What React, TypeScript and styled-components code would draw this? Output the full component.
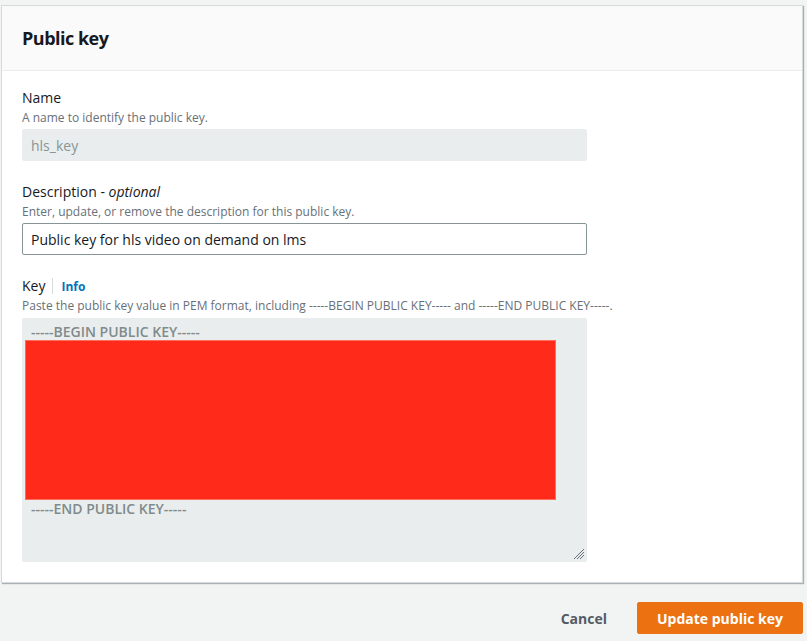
import React from "react";
import styled, { createGlobalStyle } from "styled-components";

const Global = createGlobalStyle`
  html, body { margin: 0; padding: 0; background: #f2f3f3; }
  body { font-family: "Open Sans", "Noto Sans", sans-serif; color: #16191f; }
  * { box-sizing: border-box; }
`;

const Page = styled.div`
  width: 807px;
  height: 641px;
  padding: 5px 4px 0 1px;
  display: flex;
  flex-direction: column;
`;

const Panel = styled.section`
  background: #fff;
  border: 1px solid #d5dbdb;
  box-shadow: 1px 1px 1px 0 rgba(0, 28, 36, 0.3);
  display: flex;
  flex-direction: column;
`;

const Header = styled.header`
  height: 65px;
  background: #fafafa;
  border-bottom: 1px solid #eaeded;
  display: flex;
  align-items: center;
  padding: 0 20px;
`;

const Title = styled.h2`
  margin: 0;
  font-size: 18px;
  font-weight: 700;
  color: #16191f;
  letter-spacing: -0.5px;
`;

const Body = styled.div`
  padding: 17px 20px 20px 20px;
  display: flex;
  flex-direction: column;
  gap: 21px;
`;

const Field = styled.div`
  display: flex;
  flex-direction: column;
`;

const LabelRow = styled.div`
  display: flex;
  align-items: center;
  height: 20px;
`;

const Label = styled.label`
  font-size: 14px;
  line-height: 20px;
  color: #16191f;
  em { font-style: italic; }
`;

const Divider = styled.span`
  width: 1px;
  height: 16px;
  background: #d5dbdb;
  margin: 0 8px 0 7px;
`;

const InfoLink = styled.a`
  font-size: 12px;
  font-weight: 700;
  color: #0073bb;
  text-decoration: none;
`;

const Hint = styled.div`
  font-size: 12px;
  line-height: 18px;
  color: #687078;
  margin: 1px 0 2px;
`;

const Input = styled.input<{ $disabled?: boolean }>`
  width: 565px;
  height: 32px;
  padding: 0 8px;
  font-family: inherit;
  font-size: 14px;
  border-radius: 2px;
  outline: none;
  border: 1px solid ${(p) => (p.$disabled ? "#eaeded" : "#879596")};
  background: ${(p) => (p.$disabled ? "#eaeded" : "#fff")};
  color: ${(p) => (p.$disabled ? "#879596" : "#16191f")};
`;

const KeyBox = styled.div`
  position: relative;
  width: 565px;
  height: 244px;
  margin-top: 1px;
  background: #eaeded;
  border-radius: 2px;
  padding: 5px 3px 0 3px;
  display: flex;
  flex-direction: column;
  color: #7f8b8c;
  font-size: 14px;
  font-weight: 600;
`;

const KeyLine = styled.div`
  padding-left: 6px;
  line-height: 17px;
`;

const Redacted = styled.div`
  width: 531px;
  height: 160px;
  background: #ff2a1a;
  border: 1px solid #ff6b5e;
`;

const Grip = styled.svg`
  position: absolute;
  right: 2px;
  bottom: 2px;
`;

const Footer = styled.footer`
  display: flex;
  justify-content: flex-end;
  align-items: center;
  gap: 30px;
  padding-top: 19px;
`;

const TextButton = styled.button`
  background: none;
  border: none;
  font-family: inherit;
  font-size: 14px;
  font-weight: 700;
  color: #545b64;
  padding: 0;
`;

const PrimaryButton = styled.button`
  width: 166px;
  height: 32px;
  background: #ec7211;
  border: 1px solid #ec7211;
  border-radius: 2px;
  color: #fff;
  font-family: inherit;
  font-size: 14px;
  font-weight: 700;
  padding: 0;
`;

export default function App() {
  return (
    <>
      <Global />
      <Page>
        <Panel>
          <Header>
            <Title>Public key</Title>
          </Header>
          <Body>
            <Field>
              <LabelRow>
                <Label>Name</Label>
              </LabelRow>
              <Hint>A name to identify the public key.</Hint>
              <Input $disabled value="hls_key" readOnly />
            </Field>
            <Field>
              <LabelRow>
                <Label>
                  Description - <em>optional</em>
                </Label>
              </LabelRow>
              <Hint>Enter, update, or remove the description for this public key.</Hint>
              <Input value="Public key for hls video on demand on lms" readOnly />
            </Field>
            <Field>
              <LabelRow>
                <Label>Key</Label>
                <Divider />
                <InfoLink>Info</InfoLink>
              </LabelRow>
              <Hint>
                Paste the public key value in PEM format, including -----BEGIN PUBLIC KEY----- and -----END PUBLIC KEY-----.
              </Hint>
              <KeyBox>
                <KeyLine>-----BEGIN PUBLIC KEY-----</KeyLine>
                <Redacted />
                <KeyLine>-----END PUBLIC KEY-----</KeyLine>
                <Grip width="12" height="12" viewBox="0 0 12 12">
                  <g stroke="#687078" strokeWidth="1">
                    <line x1="1" y1="11" x2="11" y2="1" />
                    <line x1="4" y1="11" x2="11" y2="4" />
                    <line x1="7" y1="11" x2="11" y2="7" />
                  </g>
                </Grip>
              </KeyBox>
            </Field>
          </Body>
        </Panel>
        <Footer>
          <TextButton>Cancel</TextButton>
          <PrimaryButton>Update public key</PrimaryButton>
        </Footer>
      </Page>
    </>
  );
}
